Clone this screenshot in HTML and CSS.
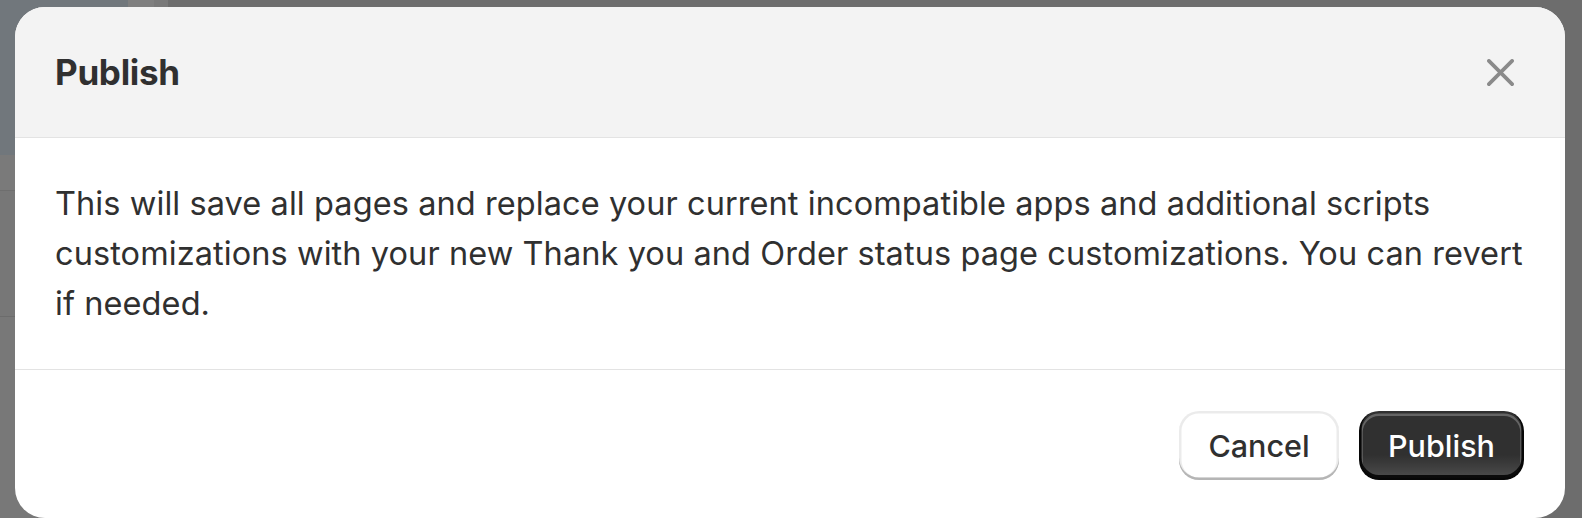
FILE: index.html
```html
<!DOCTYPE html>
<html lang="en">
<head>
<meta charset="utf-8">
<title>Publish</title>
<link rel="stylesheet" href="styles.css">
</head>
<body>
  <div class="modal" role="dialog" aria-labelledby="modal-title">
    <div class="modal-header">
      <h2 class="modal-title" id="modal-title">Publish</h2>
      <button class="close-btn" aria-label="Close">
        <svg width="27" height="27" viewBox="0 0 27 27" aria-hidden="true">
          <path d="M1.9 1.9 L25.1 25.1 M25.1 1.9 L1.9 25.1" stroke="#8a8a8a" stroke-width="3.7" stroke-linecap="round" fill="none"/>
        </svg>
      </button>
    </div>
    <div class="modal-body">
      <p class="modal-text">This will save all pages and replace your current incompatible apps and additional scripts customizations with your new Thank you and Order status page customizations. You can revert if needed.</p>
    </div>
    <div class="modal-footer">
      <button class="btn btn-secondary">Cancel</button>
      <button class="btn btn-primary">Publish</button>
    </div>
  </div>
</body>
</html>
```
FILE: styles.css
```css
html, body {
  margin: 0;
  padding: 0;
}

body {
  width: 1582px;
  height: 518px;
  overflow: hidden;
  font-family: Inter, "Noto Sans", sans-serif;
  color: #303030;
  background-color: #6d6d6d;
  background-image:
    linear-gradient(#71777c, #71777c),
    linear-gradient(#7f7f7f, #7f7f7f),
    linear-gradient(#797979, #797979),
    linear-gradient(#7a7a7a, #7a7a7a),
    linear-gradient(#6e6e6e, #6e6e6e),
    linear-gradient(#777777, #777777),
    linear-gradient(#6c6c6c, #6c6c6c),
    linear-gradient(#787878, #787878);
  background-repeat: no-repeat;
  background-size:
    128px 155px,
    26px 20px,
    14px 20px,
    128px 35px,
    128px 1px,
    128px 125px,
    128px 1px,
    128px 210px;
  background-position:
    0 0,
    128px 0,
    154px 0,
    0 155px,
    0 190px,
    0 191px,
    0 316px,
    0 317px;
  padding: 7px 17px 0 15px;
  box-sizing: border-box;
}

.modal {
  width: 1550px;
  height: 511px;
  background: #ffffff;
  border-radius: 30px;
  overflow: hidden;
  display: flex;
  flex-direction: column;
}

.modal-header {
  height: 131px;
  flex: none;
  box-sizing: border-box;
  background: #f3f3f3;
  border-bottom: 1px solid #e3e3e3;
  display: flex;
  align-items: center;
  justify-content: space-between;
  padding: 0 30px 0 40px;
}

.modal-title {
  margin: 0;
  font-size: 35px;
  line-height: 50px;
  font-weight: 650;
  letter-spacing: -0.3px;
  color: #303030;
}

.close-btn {
  width: 70px;
  height: 70px;
  border: 0;
  background: transparent;
  padding: 0;
  display: flex;
  align-items: center;
  justify-content: center;
  cursor: pointer;
}

.modal-body {
  padding: 41px 40px 40px;
  border-bottom: 1px solid #e3e3e3;
}

.modal-text {
  margin: 0;
  font-size: 32.5px;
  line-height: 50px;
  font-weight: 400;
  letter-spacing: 0.08px;
  color: #303030;
}

.modal-footer {
  flex: 1;
  display: flex;
  justify-content: flex-end;
  align-items: flex-start;
  gap: 20px;
  padding: 41px 41px 0 40px;
}

.btn {
  height: 69px;
  box-sizing: border-box;
  border: 0;
  border-radius: 20px;
  padding: 0;
  font-family: Inter, "Noto Sans", sans-serif;
  font-size: 30.5px;
  font-weight: 550;
  line-height: 50px;
  cursor: pointer;
}

.btn-secondary {
  width: 160px;
  background: #ffffff;
  color: #303030;
  box-shadow:
    inset 0 -2.5px 0 0 #b5b5b5,
    inset 0 0 0 2.5px rgba(0, 0, 0, 0.08),
    inset 0 1.25px 0 3.75px #ffffff;
}

.btn-primary {
  width: 165px;
  color: #ffffff;
  background-color: #303030;
  background-image: linear-gradient(180deg, rgba(48, 48, 48, 0) 63.5%, rgba(255, 255, 255, 0.15));
  box-shadow:
    inset 0 -2.5px 0 2.5px rgba(0, 0, 0, 0.85),
    inset 0 0 0 2.5px #303030,
    inset 0 1.25px 0 3.75px rgba(255, 255, 255, 0.25);
}
```
